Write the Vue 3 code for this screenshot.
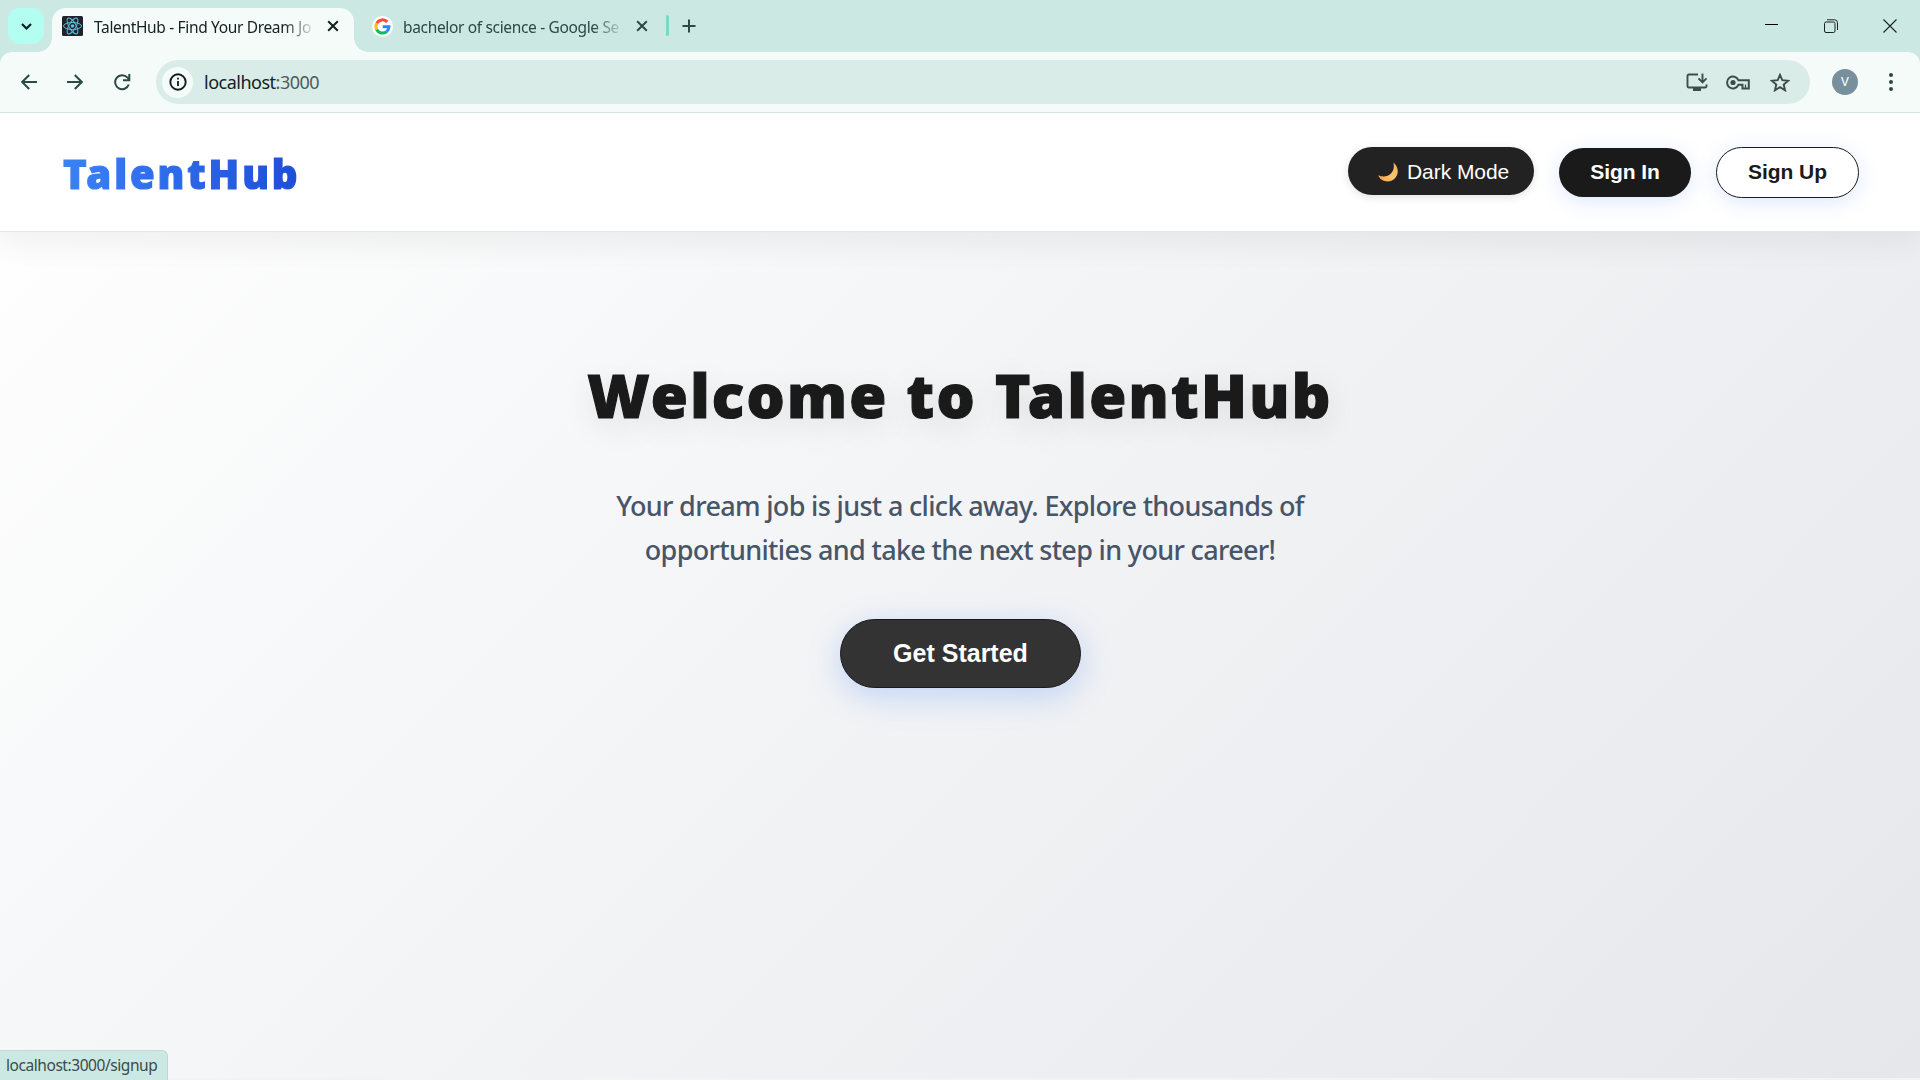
<script setup>
const tabs = [
  { id: 'talent', title: 'TalentHub - Find Your Dream Jo', active: true },
  { id: 'google', title: 'bachelor of science - Google Se', active: false },
]
const petals = [0, 60, 120]
</script>

<template>
  <div class="window">
    <div class="tabstrip">
      <div class="search-wrap">
        <button class="tab-search" aria-label="Search tabs">
          <svg width="36" height="36" viewBox="0 0 36 36"><path d="M14 16l4.500 4.500L23 16" fill="none" stroke="#0d1f1c" stroke-width="2.200" /></svg>
        </button>
      </div>
      <div v-for="t in tabs" :key="t.id" class="tab" :class="{ active: t.active }">
        <svg v-if="t.active" class="fav" width="21" height="20" viewBox="0 0 21 20">
          <rect width="21" height="20" rx="1.500" fill="#20232a" />
          <g fill="none" stroke="#58c4dc" stroke-width="1" transform="translate(10.500 10)">
            <ellipse v-for="a in petals" :key="a" rx="9" ry="3.500" :transform="`rotate(${a})`" />
          </g>
          <circle cx="10.500" cy="10" r="1.800" fill="#58c4dc" />
        </svg>
        <svg v-else class="fav" width="21" height="21" viewBox="0 0 21 21">
          <circle cx="10.500" cy="10.500" r="10.500" fill="#fff" />
          <g fill="none" stroke-width="3">
            <path d="M15.300 5.900A6.600 6.600 0 0 0 4.800 7.200" stroke="#ff4641" />
            <path d="M4.800 7.200A6.600 6.600 0 0 0 4.600 13.500" stroke="#fcc013" />
            <path d="M4.600 13.500A6.600 6.600 0 0 0 14.500 15.700" stroke="#0ebc5f" />
            <path d="M10.700 10.700H17A6.600 6.600 0 0 1 14.500 15.700" stroke="#3186ff" />
          </g>
        </svg>
        <span class="title">{{ t.title }}</span>
        <svg class="close" width="12" height="12" viewBox="0 0 12 12"><path d="M1.200 1.200l9.600 9.600M10.800 1.200L1.200 10.800" fill="none" stroke="currentColor" stroke-width="2" /></svg>
      </div>
      <i class="divider"></i>
      <svg class="plus" width="14" height="14" viewBox="0 0 14 14"><path d="M7 .5v13M.5 7h13" stroke="#2b4a45" stroke-width="2" /></svg>
      <div class="controls">
        <svg width="14" height="14" viewBox="0 0 14 14"><path d="M0 5.500h13" stroke="#000" /></svg>
        <svg width="14" height="14" viewBox="0 0 14 14" fill="none" stroke="#1a2422"><rect x=".5" y="3" width="10.500" height="10.500" rx="1.500" /><path d="M3 .8h7.500a3 3 0 0 1 3 3v7.200" /></svg>
        <svg width="14" height="14" viewBox="0 0 14 14"><path d="M.5.5l13 13M13.500.5l-13 13" stroke="#1a2422" stroke-width="1.100" /></svg>
      </div>
    </div>

    <div class="toolbar-bg">
      <div class="toolbar">
        <svg class="nav" width="16" height="16" viewBox="0 0 16 16"><path d="M16 8H1.500M8.200 1L1.200 8l7 7" /></svg>
        <svg class="nav" width="16" height="16" viewBox="0 0 16 16"><path d="M0 8h14.500M7.800 1l7 7-7 7" /></svg>
        <svg class="nav" width="17" height="17" viewBox="0 0 17 17"><path d="M14.800 10.500A7 7 0 1 1 13.300 3.400l2 2M15.300 0v6.300H9" /></svg>
        <div class="omnibox">
          <span class="info">
            <svg width="18" height="18" viewBox="0 0 18 18"><circle cx="9" cy="9" r="7.700" fill="none" stroke="#101c1a" stroke-width="1.900" /><path d="M9 8v5M9 4.700v1.900" stroke="#101c1a" stroke-width="1.800" /></svg>
          </span>
          <span class="url">localhost<em>:3000</em></span>
          <div class="actions">
            <svg width="22" height="19" viewBox="0 0 22 19" fill="none" stroke="#3f4d4a" stroke-width="1.900"><path d="M12 1.500H2.800a1.300 1.300 0 0 0-1.300 1.300v10.400a1.300 1.300 0 0 0 1.300 1.300h16.400a1.300 1.300 0 0 0 1.300-1.300V11.500M16.500.5v8.500M12.500 5.300l4 4 4-4" /><path d="M7 16.500h8" stroke-width="3" /></svg>
            <svg class="key" width="24" height="15" viewBox="0 0 24 15" fill="none" stroke="#3f4d4a" stroke-width="2"><path d="M12.400 5.200A5.900 5.900 0 1 0 12.400 9.800H16.500V13.500H22.800V5.200Z" /><circle cx="7" cy="7.500" r="2.600" fill="#3f4d4a" stroke="none" /><path d="M19.500 9.500v4" stroke-width="1.300" /></svg>
            <svg width="20" height="19" viewBox="0 0 20 19"><path d="M10 1.800l2.300 5.400 5.900.5-4.500 3.900 1.400 5.700-5.100-3.100-5.100 3.100 1.400-5.700L1.800 7.700l5.900-.5z" fill="none" stroke="#3f4d4a" stroke-width="1.900" /></svg>
          </div>
        </div>
        <span class="avatar">V</span>
        <svg class="menu" width="4" height="18" viewBox="0 0 4 18" fill="#2b4a45"><circle cx="2" cy="2" r="2" /><circle cx="2" cy="9" r="2" /><circle cx="2" cy="16" r="2" /></svg>
      </div>
    </div>

    <div class="page">
      <header class="header">
        <div class="logo">TalentHub</div>
        <nav class="buttons">
          <button class="btn mode">
            <svg width="20" height="20" viewBox="0 0 20 20">
              <defs><linearGradient id="moon" x1="0" y1="1" x2="1" y2="0"><stop offset="0" stop-color="#f59a52" /><stop offset=".5" stop-color="#fbc56c" /><stop offset="1" stop-color="#f4b05a" /></linearGradient></defs>
              <path d="M15.400.5C22 6 20.800 15.200 14 18.500 8.500 21 2 18.500.2 13.300 5 15.500 10 14.700 13 11.500 16 8.300 16.300 4 15.400.5z" fill="url(#moon)" />
            </svg>
            <span>Dark Mode</span>
          </button>
          <button class="btn signin">Sign In</button>
          <button class="btn signup">Sign Up</button>
        </nav>
      </header>
      <main class="hero">
        <h1>Welcome to TalentHub</h1>
        <p>Your dream job is just a click away. Explore thousands of<br />opportunities and take the next step in your career!</p>
        <button class="cta">Get Started</button>
      </main>
    </div>
    <div class="edge"></div>
    <div class="status">localhost:3000/signup</div>
  </div>
</template>

<style>
body { margin: 0; overflow: hidden; }
</style>

<style scoped>
* { box-sizing: border-box; }
.window { position: relative; width: 1920px; height: 1080px; overflow: hidden; display: flex; flex-direction: column; font-family: "Noto Sans", "Open Sans", sans-serif; background: #cce8e2; }
button { border: 0; padding: 0; font-family: "Liberation Sans", Arial, sans-serif; }
svg { display: block; flex: none; }

.tabstrip { height: 52px; flex: none; display: flex; background: #cce8e2; }
.search-wrap { width: 52px; padding: 8px 0 0 8px; }
.tab-search { width: 36px; height: 36px; border-radius: 12px; background: #b2fff2; }
.tab { position: relative; height: 44px; margin-top: 8px; display: flex; align-items: center; padding-bottom: 8px; color: #2b4a45; width: 302px; padding-left: 10px; }
.tab.active { background: #f4fbf9; border-radius: 14px 14px 0 0; color: #14211f; }
.tab.active::before, .tab.active::after { content: ""; position: absolute; bottom: 0; width: 14px; height: 14px; }
.tab.active::before { left: -14px; background: radial-gradient(circle at 0 0, transparent 13.500px, #f4fbf9 14px); }
.tab.active::after { right: -14px; background: radial-gradient(circle at 100% 0, transparent 13.500px, #f4fbf9 14px); }
.fav { margin-right: 11px; }
.tab:not(.active) { padding-left: 18px; width: 310px; }
.tab:not(.active) .fav { margin-right: 10px; }
.title { width: 217px; padding-top: 2px; white-space: nowrap; font-size: 15.500px; line-height: 22px; letter-spacing: -0.340px; -webkit-mask-image: linear-gradient(90deg, #000 190px, transparent 222px); mask-image: linear-gradient(90deg, #000 190px, transparent 222px); }
.close { margin-left: 16px; }
.divider { width: 3px; height: 21px; margin: 15px 0 0 2px; border-radius: 2px; background: #7bd9cc; }
.plus { margin: 19px 0 0 13px; }
.controls { margin-left: auto; display: flex; gap: 45px; padding: 19px 23px 0 0; }

.toolbar-bg { position: relative; z-index: 1; height: 61px; flex: none; background: #cce8e2; }
.toolbar { height: 61px; background: #f4fbf9; border-radius: 12px 12px 0 0; border-bottom: 1px solid #d5e3e0; display: flex; align-items: center; padding-left: 21px; }
.nav { margin-right: 30px; fill: none; stroke: #2b4a45; stroke-width: 2; }
.nav:nth-child(3) { margin-left: 1px; margin-right: 25px; }
.omnibox { width: 1654px; height: 44px; border-radius: 22px; background: #daece8; display: flex; align-items: center; padding-left: 6px; }
.info { width: 31px; height: 31px; border-radius: 50%; background: #f4fbf9; display: flex; align-items: center; justify-content: center; }
.url { margin-left: 11px; font-size: 18px; letter-spacing: -0.500px; color: #14211f; }
.url em { font-style: normal; color: #4a5c58; }
.actions { margin-left: auto; display: flex; align-items: center; gap: 19px; padding-right: 20px; }
.key { margin: 0 1px 0 -1px; }
.avatar { width: 26px; height: 26px; margin-left: 22px; border-radius: 50%; background: #78909c; color: #fff; font: 13px/26px Roboto, sans-serif; text-align: center; }
.menu { margin-left: 31px; }

.page { flex: 1; display: flex; flex-direction: column; background: linear-gradient(135deg, #ffffff 0%, #e5e7eb 100%); }
.header { height: 119px; flex: none; display: flex; align-items: center; justify-content: space-between; padding: 0 61px 0 62px; background: #fff; border-bottom: 1px solid #e5e7eb; box-shadow: 0 8px 32px rgba(26, 26, 26, 0.070); }
.logo { padding: 3px 0 0 1px; font-size: 40px; line-height: 48px; font-weight: 900; letter-spacing: 2.900px; color: transparent; -webkit-text-stroke: 1.200px transparent; background: linear-gradient(90deg, #3b82f6, #1d4ed8); -webkit-background-clip: text; background-clip: text; }
.buttons { display: flex; align-items: flex-start; gap: 25px; }
.btn { font-size: 21px; letter-spacing: -0.050px; border-radius: 26px; }
.mode { width: 186px; height: 48px; display: flex; align-items: center; gap: 9px; padding: 2px 0 0 30px; background: #222; color: #fff; box-shadow: 0 2px 8px rgba(0, 0, 0, 0.120); }
.signin { width: 132px; height: 49px; margin-top: 1px; background: #1a1a1a; color: #fff; font-weight: 700; box-shadow: 0 4px 20px rgba(59, 130, 246, 0.180); }
.signup { width: 143px; height: 51px; border: 1px solid #1a1a1a; background: #fff; color: #1a1a1a; font-weight: 700; box-shadow: 0 4px 20px rgba(59, 130, 246, 0.180); }

.hero { display: flex; flex-direction: column; align-items: center; padding-top: 121px; text-align: center; }
h1 { margin: 0; font-size: 60px; line-height: 84px; font-weight: 900; letter-spacing: 2.300px; white-space: nowrap; color: #1a1a1a; -webkit-text-stroke: 1.200px #1a1a1a; text-shadow: 0 8px 32px rgba(26, 26, 26, 0.100); }
p { margin: 47px 0 0; font-size: 27px; line-height: 44px; font-weight: 500; letter-spacing: -0.670px; white-space: nowrap; color: #475569; }
.cta { width: 241px; height: 69px; margin-top: 47px; padding-left: 1px; border: 1px solid #1a1a1a; border-radius: 35px; background: #333; color: #fff; font-size: 25px; font-weight: 700; box-shadow: 0 8px 32px rgba(59, 130, 246, 0.270); }

.edge { height: 2px; flex: none; background: #f3f3f3; }
.status { position: absolute; left: 0; bottom: 0; width: 168px; height: 30px; padding-left: 6px; border-top: 1px solid #c4d6d2; border-right: 1px solid #c4d6d2; border-top-right-radius: 6px; background: #cce8e2; color: #3a4b48; font-size: 15.500px; line-height: 29px; letter-spacing: -0.440px; white-space: nowrap; }
</style>
